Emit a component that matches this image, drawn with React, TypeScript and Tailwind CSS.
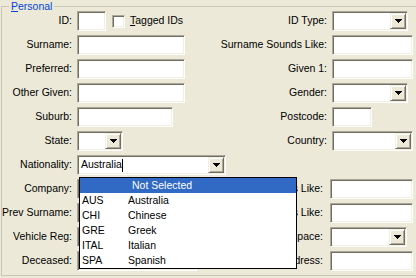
import React from 'react';

const font = { fontFamily: '"Liberation Sans", Arial, sans-serif' };

// classic sunken edit border
const sunken =
  'border border-t-[#aca899] border-l-[#aca899] border-b-white border-r-white shadow-[inset_1px_1px_0_#716f64,inset_-1px_-1px_0_#f1efe2] bg-white';

const Arrow = () => (
  <svg width="7" height="4" viewBox="0 0 7 4" shapeRendering="crispEdges">
    <rect x="0" y="0" width="7" height="1" fill="#000" />
    <rect x="1" y="1" width="5" height="1" fill="#000" />
    <rect x="2" y="2" width="3" height="1" fill="#000" />
    <rect x="3" y="3" width="1" height="1" fill="#000" />
  </svg>
);

const TextBox: React.FC<{ w: string; children?: React.ReactNode }> = ({ w, children }) => (
  <div className={`${sunken} ${w} h-[20px] shrink-0 flex items-center pl-[3px] text-black`}>{children}</div>
);

const Combo: React.FC<{ w: string; children?: React.ReactNode }> = ({ w, children }) => (
  <div className={`${sunken} ${w} h-[20px] shrink-0 flex p-[1px]`}>
    <div className="flex-1 flex items-center pl-[2px] overflow-hidden whitespace-nowrap">{children}</div>
    <div className="w-[16px] h-full flex items-center justify-center bg-[#ece9d8] border border-t-[#f1efe2] border-l-[#f1efe2] border-b-[#716f64] border-r-[#716f64] shadow-[inset_1px_1px_0_#fff,inset_-1px_-1px_0_#aca899]">
      <Arrow />
    </div>
  </div>
);

const Row: React.FC<{
  label: string;
  left: React.ReactNode;
  rightLabel?: string;
  right?: React.ReactNode;
  low?: boolean;
}> = ({ label, left, rightLabel, right, low }) => (
  <div className="flex h-[20px] items-center w-[414px]">
    <div className="w-[70px] shrink-0 flex justify-end whitespace-nowrap">{label}</div>
    <div className="ml-[5px] w-[150px] shrink-0 flex items-center">{left}</div>
    <div className={`flex-1 flex justify-end whitespace-nowrap min-w-0 ${low ? 'pr-[7px]' : 'pr-[5px]'}`}>
      {rightLabel}
    </div>
    <div className={`${low ? 'w-[86px]' : 'w-[84px]'} shrink-0 flex items-center`}>{right}</div>
  </div>
);

const nations = [
  ['AUS', 'Australia'],
  ['CHI', 'Chinese'],
  ['GRE', 'Greek'],
  ['ITAL', 'Italian'],
  ['SPA', 'Spanish'],
];

export default function App() {
  return (
    <div
      className="relative w-[416px] h-[278px] overflow-hidden bg-[#ece9d8] text-[10.5px] text-black"
      style={font}
    >
      <fieldset className="ml-[1px] w-[430px] h-[276px] border border-[#c9c6b6]">
        <legend className="ml-[7px] px-[2px] leading-[12px] text-[#0046d5]">
          <span className="underline">P</span>ersonal
        </legend>
        <div className="-mt-[1px] flex flex-col gap-[4px]">
          <Row
            label="ID:"
            left={
              <>
                <TextBox w="w-[29px]" />
                <div className={`${sunken} ml-[6px] w-[13px] h-[13px]`} />
                <span className="ml-[5px]">
                  <span className="underline">T</span>agged IDs
                </span>
              </>
            }
            rightLabel="ID Type:"
            right={<Combo w="w-[76px]" />}
          />
          <Row
            label="Surname:"
            left={<TextBox w="w-[108px]" />}
            rightLabel="Surname Sounds Like:"
            right={<TextBox w="w-[81px]" />}
          />
          <Row
            label="Preferred:"
            left={<TextBox w="w-[108px]" />}
            rightLabel="Given 1:"
            right={<TextBox w="w-[81px]" />}
          />
          <Row
            label="Other Given:"
            left={<TextBox w="w-[108px]" />}
            rightLabel="Gender:"
            right={<Combo w="w-[76px]" />}
          />
          <Row
            label="Suburb:"
            left={<TextBox w="w-[96px]" />}
            rightLabel="Postcode:"
            right={<TextBox w="w-[40px]" />}
          />
          <Row
            label="State:"
            left={<Combo w="w-[46px]" />}
            rightLabel="Country:"
            right={<Combo w="w-[81px]" />}
          />
          <Row
            label="Nationality:"
            left={
              <Combo w="w-[149px]">
                <span>Australia</span>
                <span className="inline-block w-[1px] h-[13px] bg-black" />
              </Combo>
            }
          />
          <Row
            label="Company:"
            left={<TextBox w="w-[140px]" />}
            rightLabel="Company Sounds Like:"
            right={<TextBox w="w-[83px]" />}
            low
          />
          <Row
            label="Prev Surname:"
            left={<TextBox w="w-[140px]" />}
            rightLabel="Prev Sounds Like:"
            right={<TextBox w="w-[83px]" />}
            low
          />
          <Row
            label="Vehicle Reg:"
            left={<TextBox w="w-[120px]" />}
            rightLabel="Workspace:"
            right={<Combo w="w-[77px]" />}
            low
          />
          <Row
            label="Deceased:"
            left={<Combo w="w-[120px]" />}
            rightLabel="Email Address:"
            right={<TextBox w="w-[83px]" />}
            low
          />
        </div>
      </fieldset>

      {/* open drop-down list of the Nationality combo */}
      <div className="absolute left-[79px] top-[177px] w-[218px] h-[92px] border border-black bg-white">
        <div className="h-[15px] leading-[15px] bg-[#316ac5] text-white pl-[52px]">Not Selected</div>
        {nations.map(([code, name]) => (
          <div key={code} className="h-[15px] leading-[15px] flex pl-[2px]">
            <span className="w-[46px]">{code}</span>
            <span>{name}</span>
          </div>
        ))}
      </div>
    </div>
  );
}
